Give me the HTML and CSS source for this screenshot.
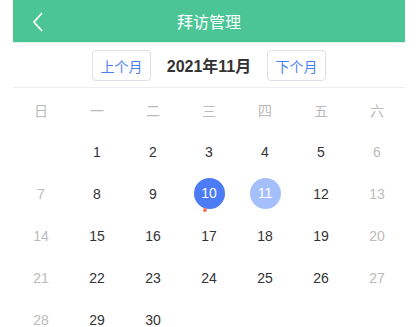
FILE: index.html
```html
<!DOCTYPE html>
<html lang="zh">
<head>
  <meta charset="UTF-8">
  <title>拜访管理</title>
  <link rel="stylesheet" href="styles.css">
</head>
<body>

<div class="page">
  <div class="nav-bar">
    <svg class="back-icon" width="12" height="20" viewBox="0 0 12 20"><path d="M10 1 L2 10 L10 19" fill="none" stroke="#fff" stroke-width="1.8"/></svg>
    <div class="nav-title">拜访管理</div>
  </div>

  <div class="month-bar">
    <button class="month-btn">上个月</button>
    <div class="month-title">2021年11月</div>
    <button class="month-btn">下个月</button>
  </div>

  <div class="week-row">
    <div>日</div><div>一</div><div>二</div><div>三</div><div>四</div><div>五</div><div>六</div>
  </div>

  <div class="days">
    <div class="day"></div>
    <div class="day">1</div>
    <div class="day">2</div>
    <div class="day">3</div>
    <div class="day">4</div>
    <div class="day">5</div>
    <div class="day weekend">6</div>

    <div class="day weekend">7</div>
    <div class="day">8</div>
    <div class="day">9</div>
    <div class="day"><span class="circle today">10</span><span class="dot"></span></div>
    <div class="day"><span class="circle picked">11</span></div>
    <div class="day">12</div>
    <div class="day weekend">13</div>

    <div class="day weekend">14</div>
    <div class="day">15</div>
    <div class="day">16</div>
    <div class="day">17</div>
    <div class="day">18</div>
    <div class="day">19</div>
    <div class="day weekend">20</div>

    <div class="day weekend">21</div>
    <div class="day">22</div>
    <div class="day">23</div>
    <div class="day">24</div>
    <div class="day">25</div>
    <div class="day">26</div>
    <div class="day weekend">27</div>

    <div class="day weekend">28</div>
    <div class="day">29</div>
    <div class="day">30</div>
  </div>
</div>

</body>
</html>
```

FILE: styles.css
```css
body { margin: 0; background: #fff; font-family: "Liberation Sans", "Noto Sans CJK SC", sans-serif; color: #333; }
.page { margin: 0 13px; }

.nav-bar {
  height: 42px; background: #4bc595; border-bottom: 1px solid #d8f2e6;
  display: flex; align-items: center; justify-content: center; position: relative;
}
.back-icon { position: absolute; left: 19px; top: 12px; }
.nav-title { color: #fff; font-size: 16px; font-family: "Noto Sans CJK SC", sans-serif; }

.month-bar {
  height: 44px; border-bottom: 1px solid #eee;
  display: flex; align-items: center; justify-content: center; gap: 0;
}
.month-btn {
  width: 59px; height: 31px; padding: 0; margin-top: 1px;
  background: #fff; border: 1px solid #dcdfe6; border-radius: 4px;
  color: #4b7ff5; font-size: 14px; font-family: "Noto Sans CJK SC", sans-serif;
}
.month-title { width: 116px; text-align: center; font-size: 16px; font-weight: bold; color: #333; }

.week-row {
  display: grid; grid-template-columns: repeat(7, 1fr);
  height: 43px; align-items: center; text-align: center;
  color: #bbb; font-size: 14px; font-family: "Noto Sans CJK SC", sans-serif;
}

.days { display: grid; grid-template-columns: repeat(7, 1fr); grid-auto-rows: 42px; }
.day {
  display: flex; align-items: center; justify-content: center; position: relative;
  font-size: 14px; color: #333;
}
.day.weekend { color: #bbb; }
.circle {
  width: 31px; height: 31px; border-radius: 50%; margin-top: -2px;
  display: flex; align-items: center; justify-content: center; color: #fff;
}
.circle.today { background: #4b7bf5; }
.circle.picked { background: #a5bffb; }
.dot {
  position: absolute; left: 50%; top: 35px; margin-left: -6px;
  width: 4px; height: 4px; border-radius: 50%; background: #f5755b;
}
```
